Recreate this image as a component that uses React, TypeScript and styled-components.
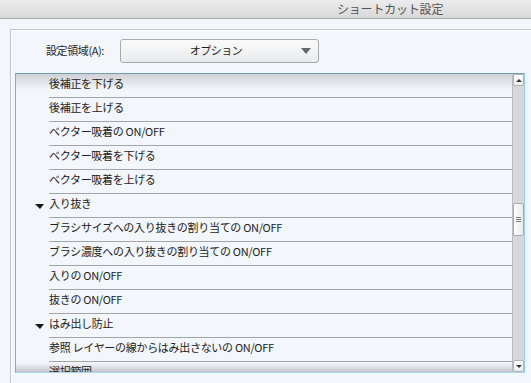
import styled, { createGlobalStyle } from "styled-components";

const GlobalStyle = createGlobalStyle`
  html, body {
    margin: 0;
    padding: 0;
    background: #f3f6fa;
    overflow: hidden;
  }
  body {
    font-family: "Noto Sans CJK JP", "Liberation Sans", sans-serif;
    color: #1e1e1e;
  }
`;

type Entry =
  | { kind: "item"; label: string }
  | { kind: "group"; label: string };

const entries: Entry[] = [
  { kind: "item", label: "後補正を下げる" },
  { kind: "item", label: "後補正を上げる" },
  { kind: "item", label: "ベクター吸着の ON/OFF" },
  { kind: "item", label: "ベクター吸着を下げる" },
  { kind: "item", label: "ベクター吸着を上げる" },
  { kind: "group", label: "入り抜き" },
  { kind: "item", label: "ブラシサイズへの入り抜きの割り当ての ON/OFF" },
  { kind: "item", label: "ブラシ濃度への入り抜きの割り当ての ON/OFF" },
  { kind: "item", label: "入りの ON/OFF" },
  { kind: "item", label: "抜きの ON/OFF" },
  { kind: "group", label: "はみ出し防止" },
  { kind: "item", label: "参照 レイヤーの線からはみ出さないの ON/OFF" },
  { kind: "group", label: "選択範囲" },
];

const App = () => {
  return (
    <Window>
      <GlobalStyle />
      <TitleBar>
        <Title>ショートカット設定</Title>
      </TitleBar>
      <Body>
        <Panel>
          <AreaRow>
            <AreaLabel>設定領域(A):</AreaLabel>
            <Select>
              <SelectText>オプション</SelectText>
              <SelectArrow />
            </Select>
          </AreaRow>
          <ListBox>
            <ListContent>
              <TopShade />
              <BottomShade />
              {entries.map((e, i) => (
                <Row key={i}>
                  <Twisty>{e.kind === "group" && <TwistyArrow />}</Twisty>
                  <Cell>{e.label}</Cell>
                </Row>
              ))}
            </ListContent>
            <ScrollBar>
              <ScrollButton>
                <ScrollArrowUp />
              </ScrollButton>
              <Track>
                <Thumb>
                  <Grip />
                  <Grip />
                  <Grip />
                </Thumb>
              </Track>
              <ScrollButton>
                <ScrollArrowDown />
              </ScrollButton>
            </ScrollBar>
          </ListBox>
        </Panel>
      </Body>
    </Window>
  );
};

const Window = styled.div`
  width: 531px;
  height: 383px;
  display: flex;
  flex-direction: column;
  overflow: hidden;
`;

const TitleBar = styled.div`
  height: 18px;
  flex-shrink: 0;
  background: linear-gradient(#ececec, #d9d9d9);
  border-bottom: 1px solid #a9a9a9;
  display: flex;
  align-items: center;
  padding-left: 337px;
`;

const Title = styled.span`
  font-size: 12px;
  line-height: 14px;
  color: #555;
  letter-spacing: -0.2px;
`;

const Body = styled.div`
  flex: 1;
  padding: 10px 0 0 10px;
  display: flex;
  min-height: 0;
`;

const Panel = styled.div`
  flex: 1;
  border-top: 1px solid #c3c7cc;
  border-left: 1px solid #c3c7cc;
  box-shadow: inset 1px 1px 0 #ffffff;
  padding: 9px 6px 0 4px;
  display: flex;
  flex-direction: column;
`;

const AreaRow = styled.div`
  display: flex;
  align-items: center;
  height: 24px;
  padding-left: 31px;
  gap: 4px;
`;

const AreaLabel = styled.span`
  font-size: 11px;
  line-height: 14px;
  padding-bottom: 2px;
  color: #1e1e1e;
  width: 70px;
  white-space: nowrap;
  letter-spacing: -0.4px;
`;

const Select = styled.div`
  width: 199px;
  height: 24px;
  box-sizing: border-box;
  border: 1px solid #aaaaaa;
  border-radius: 3px;
  background: linear-gradient(#fbfbfb, #e9eaec);
  display: flex;
  align-items: center;
  padding: 0 7px 0 0;
`;

const SelectText = styled.span`
  flex: 1;
  text-align: center;
  font-size: 11px;
  line-height: 14px;
  padding: 0 0 2px 10px;
  letter-spacing: -0.5px;
`;

const SelectArrow = styled.span`
  width: 0;
  height: 0;
  border-left: 5px solid transparent;
  border-right: 5px solid transparent;
  border-top: 6px solid #666;
`;

const ListBox = styled.div`
  margin-top: 10px;
  width: 510px;
  height: 300px;
  box-sizing: border-box;
  border-top: 1px solid #6d9fb8;
  border-left: 1px solid #86acc2;
  border-right: 1px solid #8fd2ef;
  border-bottom: 1px solid #a5d6ec;
  display: flex;
  background: #f3f6fa;
`;

const ListContent = styled.div`
  flex: 1;
  position: relative;
  overflow: hidden;
`;

const Row = styled.div`
  position: relative;
  z-index: 1;
  height: 24px;
  display: flex;
  padding-left: 19px;
`;

const Twisty = styled.div`
  width: 14px;
  display: flex;
  align-items: center;
  padding-top: 1px;
`;

const TwistyArrow = styled.span`
  width: 0;
  height: 0;
  border-left: 5px solid transparent;
  border-right: 4px solid transparent;
  border-top: 5px solid #1a1a1a;
`;

const Cell = styled.div`
  flex: 1;
  box-sizing: border-box;
  border-bottom: 1px solid #a2a6aa;
  display: flex;
  align-items: center;
  padding-bottom: 5px;
  font-size: 11px;
  line-height: 14px;
  white-space: nowrap;
  letter-spacing: -0.3px;
  color: #222;
`;

const TopShade = styled.div`
  position: absolute;
  left: 0;
  right: 0;
  top: 0;
  height: 16px;
  background: linear-gradient(#cfd1d4, rgba(243, 246, 250, 0));
`;

const BottomShade = styled.div`
  position: absolute;
  left: 0;
  right: 0;
  bottom: 0;
  height: 9px;
  background: linear-gradient(rgba(243, 246, 250, 0), #c3c5c9);
`;

const ScrollBar = styled.div`
  width: 11px;
  background: #d5d7da;
  border-left: 1px solid #b9bbbe;
  display: flex;
  flex-direction: column;
`;

const ScrollButton = styled.div`
  height: 12px;
  box-sizing: border-box;
  border: 1px solid #b0b2b5;
  border-radius: 2px;
  background: linear-gradient(#ffffff, #ecedef);
  display: flex;
  align-items: center;
  justify-content: center;
`;

const ScrollArrowUp = styled.span`
  width: 0;
  height: 0;
  border-left: 3px solid transparent;
  border-right: 3px solid transparent;
  border-bottom: 3px solid #333;
`;

const ScrollArrowDown = styled.span`
  width: 0;
  height: 0;
  border-left: 3px solid transparent;
  border-right: 3px solid transparent;
  border-top: 3px solid #333;
`;

const Track = styled.div`
  flex: 1;
  padding-top: 117px;
`;

const Thumb = styled.div`
  height: 33px;
  box-sizing: border-box;
  border: 1px solid #a9abae;
  border-radius: 2px;
  background: linear-gradient(90deg, #ffffff, #e8e9eb);
  display: flex;
  flex-direction: column;
  align-items: center;
  justify-content: center;
  gap: 1px;
`;

const Grip = styled.span`
  width: 5px;
  height: 1px;
  background: #7a7c80;
`;

export default App;
